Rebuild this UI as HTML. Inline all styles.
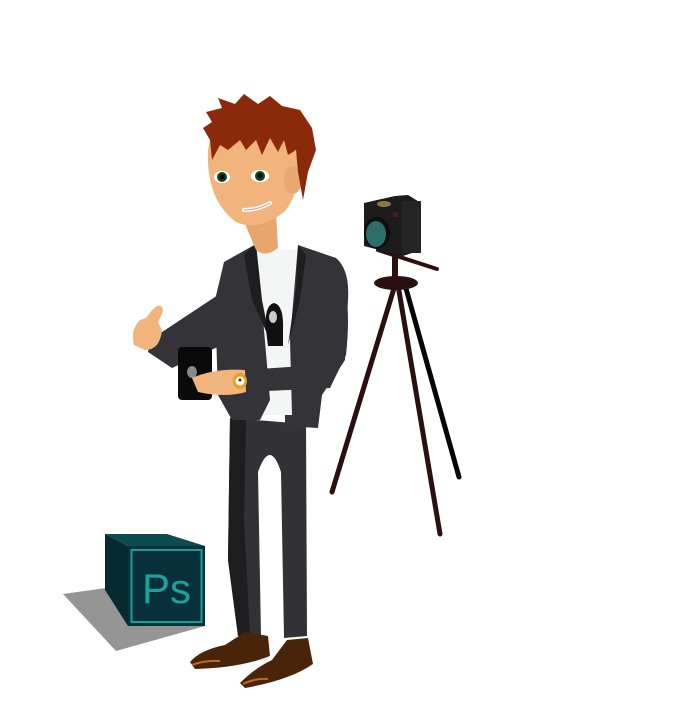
<!DOCTYPE html>
<html><head><style>html,body{margin:0;padding:0;background:#fff}svg{display:block}</style></head>
<body>
<svg width="700" height="711" viewBox="0 0 700 711" xmlns="http://www.w3.org/2000/svg">
<!-- Ps box -->
<polygon points="63,594 106,588 130,626 205,626 116,651" fill="#959595"/>
<polygon points="105,534 167,534 205,546 128,546" fill="#0e4a52"/>
<polygon points="105,534 128,546 128,626 105,590" fill="#072930"/>
<rect x="128" y="546" width="77" height="80" fill="#08303a"/>
<rect x="131.5" y="550" width="70" height="72" fill="none" stroke="#1a9e9a" stroke-width="2"/>
<text x="142" y="603" font-family="Liberation Sans, sans-serif" font-size="42" fill="#1aa39c">Ps</text>
<!-- tripod -->
<line x1="395" y1="285" x2="332" y2="492" stroke="#2a1010" stroke-width="5" stroke-linecap="round"/>
<line x1="405" y1="285" x2="459" y2="477" stroke="#050505" stroke-width="5" stroke-linecap="round"/>
<line x1="398" y1="285" x2="440" y2="534" stroke="#2a1010" stroke-width="5" stroke-linecap="round"/>
<ellipse cx="396" cy="283" rx="22" ry="7" fill="#2a1010"/>
<rect x="392" y="250" width="6" height="34" fill="#2a1010"/>
<line x1="378" y1="250" x2="437" y2="269" stroke="#2a1010" stroke-width="4" stroke-linecap="round"/>
<!-- camera -->
<polygon points="364,203 395,196 408,195 421,203 421,250 403,256 364,246" fill="#1c1c1c"/>
<rect x="402" y="201" width="19" height="52" fill="#252525"/>
<ellipse cx="384" cy="204" rx="7" ry="3" fill="#8a7a3a"/>
<rect x="393" y="212" width="5" height="5" fill="#3a2020"/>
<ellipse cx="377" cy="233" rx="13" ry="16" fill="#0e0e0e"/>
<ellipse cx="376" cy="234" rx="10" ry="13" fill="#2e6e6a"/>
<!-- legs -->
<path d="M230,418 L306,424 L307,636 L284,638 L281,472 Q270,438 258,472 L261,636 L238,636 L228,560 Z" fill="#323236"/>
<path d="M230,418 L246,420 L244,520 L250,636 L238,636 L228,560 Z" fill="#1e1e20"/>
<!-- shoes -->
<path d="M190,662 Q200,650 225,645 L245,632 L268,636 L270,656 Q240,668 195,669 Z" fill="#4a2408"/>
<path d="M240,683 Q255,668 272,660 L287,640 L308,638 L313,664 Q290,680 245,688 Z" fill="#4a2408"/>
<path d="M192,665 Q205,660 220,661" stroke="#c06a20" stroke-width="2" fill="none"/>
<path d="M243,684 Q255,678 268,679" stroke="#c06a20" stroke-width="2" fill="none"/>
<!-- torso shirt -->
<polygon points="255,250 298,250 292,415 258,415" fill="#f4f6f6"/>
<!-- jacket -->
<path d="M224,262 L256,244 L264,330 L270,400 L260,420 L232,420 L218,395 L215,300 Z" fill="#333338"/>
<path d="M298,245 L336,258 Q350,270 348,300 L345,360 L322,395 L318,428 L285,426 L285,415 L292,415 L290,340 Z" fill="#333338"/>
<path d="M256,244 L262,300 L270,340 L252,300 L244,254 Z" fill="#1e1e20"/>
<path d="M298,245 L306,255 L300,300 L288,345 L296,290 Z" fill="#1e1e20"/>
<!-- mona lisa -->
<path d="M266,330 Q264,305 274,303 Q284,305 283,330 L283,346 L268,346 Z" fill="#111"/>
<ellipse cx="273" cy="317" rx="4" ry="6" fill="#ccc"/>
<!-- left arm -->
<path d="M218,295 L150,340 L148,352 L172,368 L222,345 Z" fill="#333338"/>
<path d="M146,318 L152,310 L157,306 Q165,305 162,314 L158,322 L162,330 Q160,350 145,350 L134,345 Q130,330 140,320 Z" fill="#f0b47c"/>
<!-- phone -->
<rect x="178" y="347" width="34" height="53" rx="4" fill="#0a0a0a"/>
<ellipse cx="192" cy="372" rx="5" ry="6" fill="#888"/>
<!-- right arm -->
<path d="M340,270 Q352,300 346,355 L330,388 L245,392 L244,370 L318,365 L325,300 Z" fill="#333338"/>
<path d="M192,378 Q215,368 245,370 L246,392 Q225,398 198,392 Z" fill="#f0b47c"/>
<ellipse cx="240" cy="381" rx="7" ry="8" fill="#e8a020"/>
<circle cx="240" cy="381" r="4.5" fill="#fff"/>
<circle cx="240" cy="380" r="1.5" fill="#333"/>
<!-- neck -->
<path d="M240,212 L276,212 L278,248 Q266,258 256,250 Z" fill="#e8a66e"/>
<!-- head -->
<path d="M208,150 Q206,200 236,222 Q258,232 284,212 Q300,195 298,160 L290,130 L212,130 Z" fill="#f0b47c"/>
<ellipse cx="293" cy="180" rx="9" ry="14" fill="#eaa870"/>
<ellipse cx="222" cy="177" rx="8" ry="6" fill="#fff"/>
<circle cx="222" cy="177" r="5" fill="#0b4a20"/>
<circle cx="222" cy="177" r="2.5" fill="#000"/>
<ellipse cx="260" cy="176" rx="9" ry="6" fill="#fff"/>
<circle cx="260" cy="176" r="5" fill="#0b4a20"/>
<circle cx="260" cy="176" r="2.5" fill="#000"/>
<path d="M244,210 Q258,210 270,203" stroke="#fff" stroke-width="4" fill="none" stroke-linecap="round"/>
<path d="M244,210 Q258,210 270,203" stroke="#e88a8a" stroke-width="1" fill="none"/>
<!-- hair -->
<path d="M203,128 L212,122 L206,112 L222,108 L218,98 L235,104 L244,94 L258,104 L270,96 L282,106 L300,110 L312,128 L316,150 L308,172 L303,200 L298,172 L296,150 L288,155 L284,140 L278,152 L270,138 L262,155 L256,140 L246,150 L240,140 L228,150 L220,145 L212,160 L210,140 Z" fill="#8a2a0a"/>
</svg>
</body></html>
